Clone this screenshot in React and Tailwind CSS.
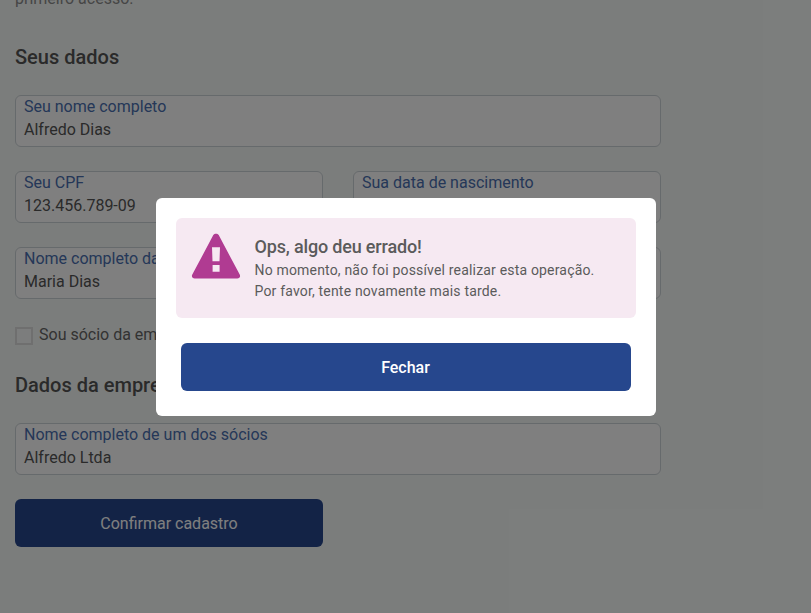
function Field({ label, value = '', className = '' }) {
  return (
    <div className={`flex h-13 flex-col rounded-[6px] border border-[#cdd4d8] bg-white px-2 ${className}`}>
      <span className="h-[22px] text-base leading-[22px] whitespace-nowrap text-[#4a6fb0]">{label}</span>
      <span className="h-6 text-base leading-6 whitespace-nowrap text-[#555]">{value}</span>
    </div>
  )
}

function SectionTitle({ children, className = '' }) {
  return <h2 className={`h-6 text-xl leading-6 font-medium whitespace-nowrap text-[#545454] ${className}`}>{children}</h2>
}

function WarningIcon() {
  return (
    <svg width="50" height="46" viewBox="0 0 50 46" className="shrink-0">
      <path
        fill="#b03b92"
        fillRule="evenodd"
        d="M22.3 2.1C23.5 .3 26.5 .3 27.7 2.1L48.7 41.6C49.8 43.6 48.5 45.4 46.3 45.4H3.7C1.5 45.4 .2 43.6 1.3 41.6ZM21 14.3L21.5 28.2H28.5L29 14.3ZM21.6 32V38.8H28.6V32Z"
      />
    </svg>
  )
}

export default function App() {
  return (
    <div className="relative h-[613px] w-full overflow-hidden bg-[#f7fbf9] font-['Roboto','Liberation_Sans',sans-serif]">
      <main className="flex w-[661px] flex-col pl-[15px]">
        <p className="-mt-[13px] h-6 text-base leading-6 text-[#8c8c8c]">primeiro acesso.</p>
        <SectionTitle className="mt-[34px]">Seus dados</SectionTitle>
        <Field className="mt-[26px]" label="Seu nome completo" value="Alfredo Dias" />
        <div className="mt-6 grid grid-cols-2 gap-[30px]">
          <Field label="Seu CPF" value="123.456.789-09" />
          <Field label="Sua data de nascimento" />
        </div>
        <Field className="mt-6" label="Nome completo da sua mãe" value="Maria Dias" />
        <label className="mt-6 flex h-6 items-center">
          <span className="mt-[2px] h-[18px] w-[18px] border-2 border-[#dedfdf] bg-[#f9fbfa]" />
          <span className="ml-[6px] text-base leading-6 text-[#666]">Sou sócio da empresa</span>
        </label>
        <SectionTitle className="mt-[26px]">Dados da empresa</SectionTitle>
        <Field className="mt-[26px]" label="Nome completo de um dos sócios" value="Alfredo Ltda" />
        <button className="mt-6 h-12 w-[308px] rounded-[6px] bg-[#26478d] pt-[2px] text-base text-white">
          Confirmar cadastro
        </button>
      </main>

      <div className="absolute inset-0 flex justify-center bg-black/50 pt-[198px] pl-px">
        <div className="flex h-[218px] w-[500px] flex-col rounded-[6px] bg-white px-5 pt-5">
          <div className="flex h-[100px] rounded-[6px] bg-[#f6e9f2] pt-[15px] pl-[14.5px]">
            <WarningIcon />
            <div className="ml-[14px] pt-px text-[#5b5b5b]">
              <h3 className="h-[26px] text-lg leading-[26px] font-medium tracking-[-0.17px]">Ops, algo deu errado!</h3>
              <p className="text-sm leading-[21px] tracking-[0.18px]">
                No momento, não foi possível realizar esta operação.
                <br />
                Por favor, tente novamente mais tarde.
              </p>
            </div>
          </div>
          <button className="mx-[5px] mt-[25px] h-12 rounded-[6px] bg-[#26478d] pt-[2px] pr-px text-base font-medium text-white">
            Fechar
          </button>
        </div>
      </div>
    </div>
  )
}
